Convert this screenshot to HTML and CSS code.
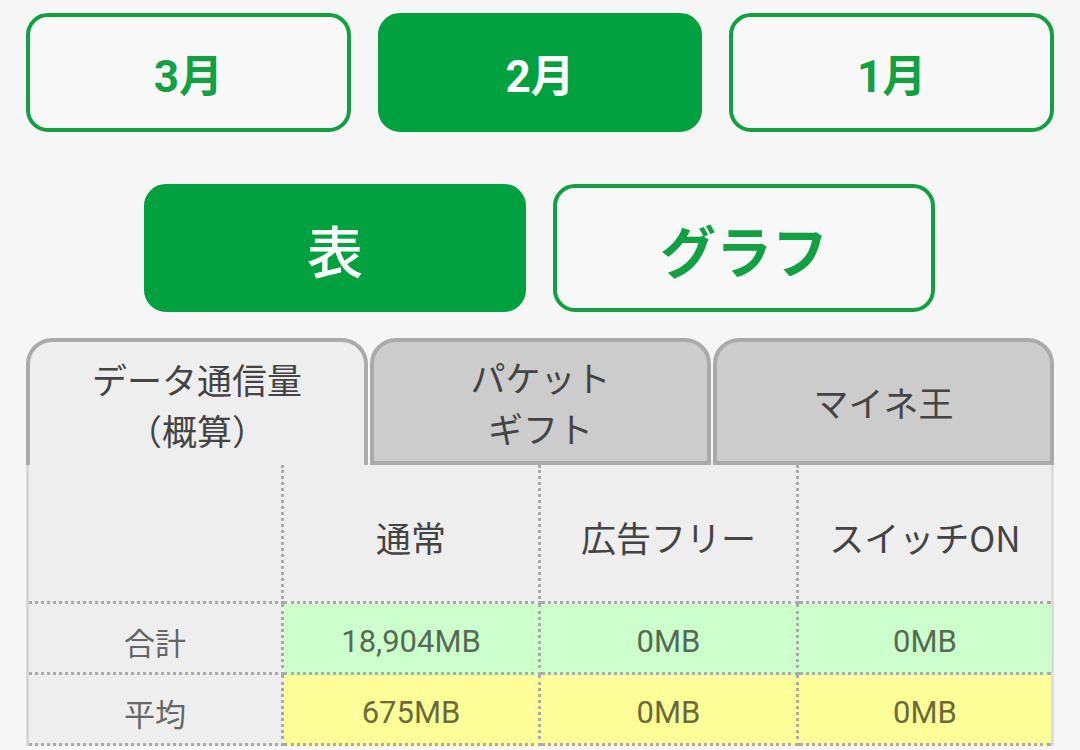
FILE: index.html
```html
<!DOCTYPE html>
<html lang="ja">
<head>
<meta charset="utf-8">
<link rel="stylesheet" href="styles.css">
</head>
<body>
<div class="months">
  <div class="btn month">3月</div>
  <div class="btn month active">2月</div>
  <div class="btn month">1月</div>
</div>
<div class="views">
  <div class="btn view active light">表</div>
  <div class="btn view">グラフ</div>
</div>
<div class="tabs">
  <div class="tab active">データ通信量<br>（概算）</div>
  <div class="tab">パケット<br>ギフト</div>
  <div class="tab">マイネ王</div>
</div>
<div class="grid">
  <div class="cell head label"></div>
  <div class="cell head">通常</div>
  <div class="cell head">広告フリー</div>
  <div class="cell head">スイッチON</div>

  <div class="cell label row">合計</div>
  <div class="cell green row">18,904MB</div>
  <div class="cell green row">0MB</div>
  <div class="cell green row">0MB</div>

  <div class="cell label row">平均</div>
  <div class="cell yellow row">675MB</div>
  <div class="cell yellow row">0MB</div>
  <div class="cell yellow row">0MB</div>
</div>
</body>
</html>
```
FILE: styles.css
```css
body {
  margin: 0;
  background: #f6f6f6;
  font-family: Roboto, "Noto Sans CJK JP", sans-serif;
  width: 1080px;
  height: 750px;
  overflow: hidden;
}
.months {
  display: flex;
  gap: 27px;
  padding: 13px 26px 0;
}
.btn {
  box-sizing: border-box;
  border: 4px solid #13a043;
  border-radius: 22px;
  color: #13a043;
  font-weight: 700;
  display: flex;
  align-items: center;
  justify-content: center;
  background: #f8f8f8;
}
.btn.active {
  background: #00a13e;
  border-color: #00a13e;
  color: #fff;
}
.month {
  flex: 1;
  height: 119px;
  font-size: 44px;
}
.views {
  display: flex;
  justify-content: center;
  gap: 27px;
  margin-top: 52px;
  padding-right: 1px;
}
.view {
  width: 382px;
  height: 128px;
  font-size: 56px;
  font-family: "Noto Sans CJK JP", sans-serif;
}
.view.light {
  font-weight: 500;
}
.tabs {
  display: flex;
  gap: 2px;
  margin: 26px 26px 0;
}
.tab {
  box-sizing: border-box;
  flex: 1;
  height: 127px;
  border: 4px solid #aaaaaa;
  border-radius: 26px 26px 0 0;
  background: #cccccc;
  color: #444;
  font-family: "Noto Sans CJK JP", sans-serif;
  font-size: 35px;
  line-height: 51px;
  text-align: center;
  display: flex;
  align-items: center;
  justify-content: center;
}
.tab.active {
  background: #eeeeee;
  border-bottom: none;
  flex: 0 0 342px;
}
.grid {
  margin: 0 26px;
  display: grid;
  grid-template-columns: 255px 257px 258px 1fr;
  background: #eeeeee;
  border-left: 3px solid #d8d8d8;
  border-right: 3px solid #dddddd;
}
.cell {
  box-sizing: border-box;
  display: flex;
  align-items: center;
  justify-content: center;
  border-right: 3px dotted #aaaaaa;
  border-bottom: 3px dotted #aaaaaa;
}
.cell:nth-child(4n) {
  border-right: none;
}
.head {
  height: 139px;
  color: #444;
  font-family: "Noto Sans CJK JP", sans-serif;
  font-size: 35px;
  padding-top: 6px;
}
.row {
  height: 71px;
  font-size: 31px;
  padding-top: 6px;
}
.label {
  color: #666;
  font-family: "Noto Sans CJK JP", sans-serif;
  font-size: 31px;
}
.head.label {
  font-size: 35px;
}
.green {
  background: #ccffcc;
  color: #556b55;
}
.yellow {
  background: #ffff99;
  color: #6b6b3a;
}
```
